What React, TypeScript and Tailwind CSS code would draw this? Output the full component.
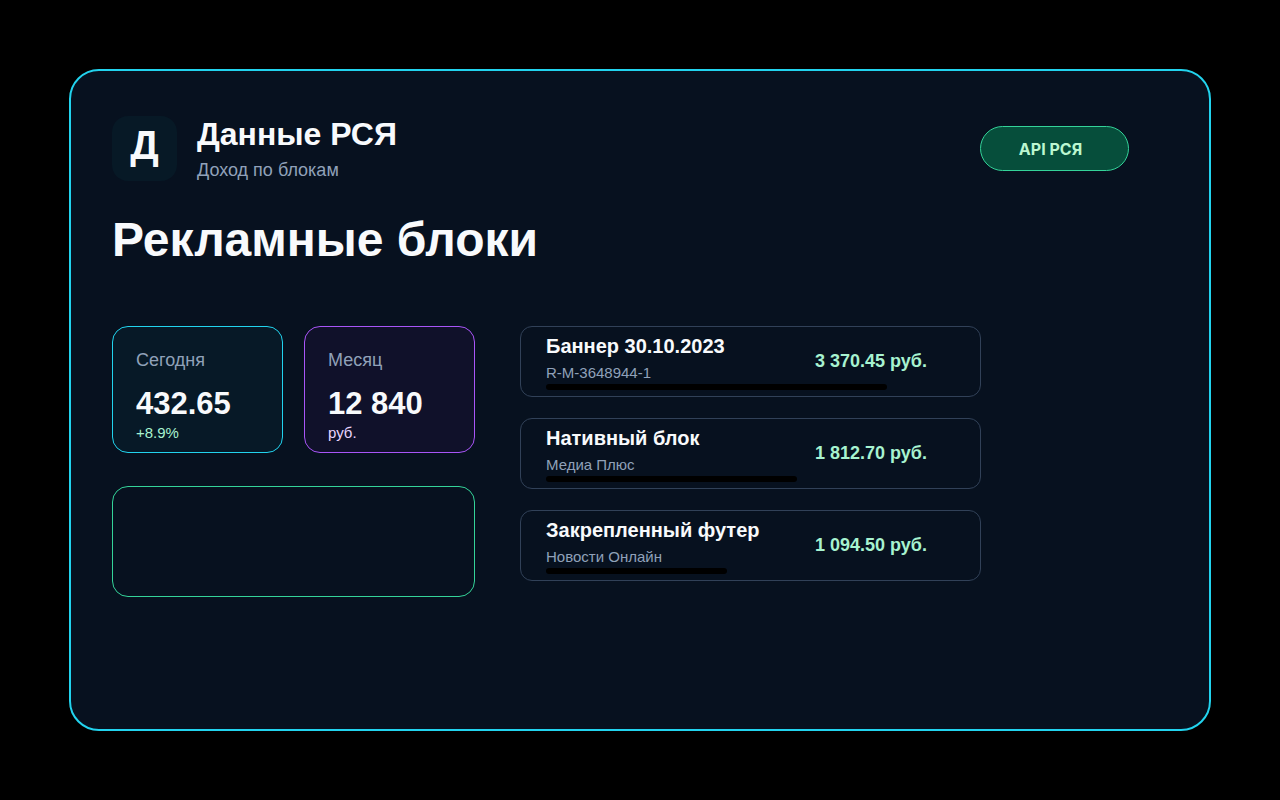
interface StatCardProps {
  label: string
  value: string
  note: string
  className: string
  noteClassName: string
}

interface AdBlock {
  name: string
  source: string
  amount: string
  share: number
}

const blocks: AdBlock[] = [
  { name: 'Баннер 30.10.2023', source: 'R-M-3648944-1', amount: '3 370.45 руб.', share: 83.4 },
  { name: 'Нативный блок', source: 'Медиа Плюс', amount: '1 812.70 руб.', share: 61.4 },
  { name: 'Закрепленный футер', source: 'Новости Онлайн', amount: '1 094.50 руб.', share: 44.3 },
]

function StatCard({ label, value, note, className, noteClassName }: StatCardProps) {
  return (
    <div className={`h-[127px] rounded-2xl border px-[23px] pt-[21px] ${className}`}>
      <p className="text-[18px] leading-6 text-slate-400">{label}</p>
      <p className="mt-3 text-[31px] leading-10 font-bold text-slate-50">{value}</p>
      <p className={`text-[15px] leading-[18px] ${noteClassName}`}>{note}</p>
    </div>
  )
}

function BlockRow({ block }: { block: AdBlock }) {
  return (
    <li className="h-[71px] rounded-xl border border-slate-700 px-[25px] pt-[7px]">
      <div className="flex items-end justify-between pr-7">
        <div>
          <h3 className="text-[20px] leading-6 font-bold text-slate-50">{block.name}</h3>
          <p className="mt-[5px] text-[15px] leading-5 text-slate-400">{block.source}</p>
        </div>
        <span className="pb-[10px] text-[18px] leading-6 font-bold whitespace-nowrap text-[#a7f3d0]">
          {block.amount}
        </span>
      </div>
      {/* Share of income */}
      <div className="mt-px h-[6px] rounded-full bg-black" style={{ width: `${block.share}%` }} />
    </li>
  )
}

export default function App() {
  return (
    <div className="flex min-h-screen bg-black p-[69px] font-['Liberation_Sans',Arial,sans-serif]">
      <main className="flex-1 rounded-[30px] border-2 border-[#22d3ee] bg-[#07111f] px-[41px] pt-[45px] pb-10">
        {/* Header */}
        <header className="flex items-center justify-between pr-[39px]">
          <div className="flex items-center gap-5">
            <div className="flex size-[65px] items-center justify-center rounded-2xl bg-[#071926] pb-2 text-[40px] leading-none font-bold text-slate-50">
              Д
            </div>
            <div>
              <p className="text-[32px] leading-9 font-bold text-slate-50">Данные РСЯ</p>
              <p className="mt-[7px] text-[18px] leading-[22px] text-slate-400">Доход по блокам</p>
            </div>
          </div>
          <button
            type="button"
            className="h-[45px] w-[149px] rounded-full border border-[#34d399] bg-[#064e3b] pr-2 font-[Inter,sans-serif] text-[16px] font-bold text-[#bbf7d0]"
          >
            API РСЯ
          </button>
        </header>

        <h1 className="mt-[31px] text-[48px] leading-[56px] font-bold text-slate-50">Рекламные блоки</h1>

        <div className="mt-[58px] grid max-w-[869px] grid-cols-[363fr_461fr] gap-[45px]">
          {/* Totals */}
          <section>
            <div className="grid grid-cols-2 gap-[21px]">
              <StatCard
                label="Сегодня"
                value="432.65"
                note="+8.9%"
                className="border-[#22d3ee] bg-[#071927]"
                noteClassName="text-[#a7f3d0]"
              />
              <StatCard
                label="Месяц"
                value="12 840"
                note="руб."
                className="border-[#a855f7] bg-[#10112a]"
                noteClassName="text-[#e9d5ff]"
              />
            </div>
            <div className="mt-[33px] h-[111px] rounded-2xl border border-[#34d399]" />
          </section>

          {/* Ad blocks */}
          <ul className="flex flex-col gap-[21px]">
            {blocks.map((block) => (
              <BlockRow key={block.name} block={block} />
            ))}
          </ul>
        </div>
      </main>
    </div>
  )
}
